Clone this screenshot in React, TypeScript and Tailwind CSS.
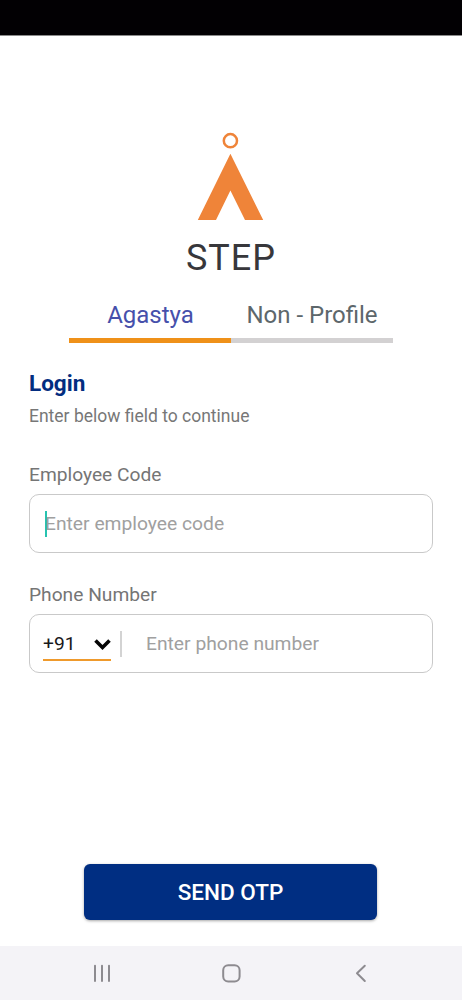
import { useState } from "react";

const tabs = ["Agastya", "Non - Profile"];

function Logo() {
  return (
    <svg width="68" height="90" viewBox="0 0 68 90" className="mt-24 shrink-0">
      <circle cx="33.4" cy="8.7" r="6.6" fill="none" stroke="#ef8439" strokeWidth="2.5" />
      <path d="M33.4 21.8 L66.2 88 H48 L33.4 58.5 L19 88 H0.8 Z" fill="#ef8439" />
    </svg>
  );
}

function NavBar() {
  return (
    <nav className="relative mt-auto h-[54px] shrink-0 bg-[#f4f3f7]">
      <svg width="462" height="54" viewBox="0 0 462 54" fill="none" stroke="#8d8b90" strokeWidth="2" strokeLinecap="round" strokeLinejoin="round">
        <path d="M95 19.7 V35 M102 19.7 V35 M109 19.7 V35" />
        <rect x="223.2" y="19.2" width="16.4" height="16.4" rx="5" />
        <path d="M364.8 19.7 L357 27.3 L364.8 35" />
      </svg>
    </nav>
  );
}

export default function App() {
  const [active, setActive] = useState(0);

  return (
    <div className="flex h-[1000px] w-[462px] flex-col overflow-hidden bg-white font-['Roboto',sans-serif]">
      <div className="h-9 shrink-0 border-b border-[#8a8a8a] bg-[#020003]" />

      <header className="flex flex-col items-center">
        <Logo />
        <h1 className="mt-3 text-[36px] leading-[48px] tracking-[1px] text-[#37373b]">STEP</h1>
        <div className="mt-[17px] flex w-[324px]">
          {tabs.map((tab, index) => (
            <button
              key={tab}
              onClick={() => setActive(index)}
              className={`h-11 w-[162px] border-b-[5px] pb-[7px] text-[24px] leading-8 whitespace-nowrap ${
                index === active ? "border-[#ef9119] pl-px text-[#4650ab]" : "border-[#d3d1d2] text-[#5d676b]"
              }`}
            >
              {tab}
            </button>
          ))}
        </div>
      </header>

      <main className="flex flex-col px-[29px] pt-[26px]">
        <h2 className="text-[22.5px] leading-7 font-bold text-[#032d80]">Login</h2>
        <p className="mt-[7px] text-[17.5px] leading-6 text-[#777777]">Enter below field to continue</p>

        <label className="mt-[35px] text-[19.2px] leading-6 text-[#757575]">Employee Code</label>
        <div className="mt-[7px] flex h-[59px] w-[404px] items-center rounded-[10px] border border-[#c9c9c9] px-[15px]">
          <span className="h-[26px] w-0.5 shrink-0 bg-[#26c3b0]" />
          <span className="-ml-0.5 pt-0.5 text-[19.25px] text-[#a0a0a0]">Enter employee code</span>
        </div>

        <label className="mt-[30px] text-[19.2px] leading-6 text-[#757575]">Phone Number</label>
        <div className="mt-[7px] flex h-[59px] w-[404px] items-center rounded-[10px] border border-[#c9c9c9] pl-[13px]">
          <div className="flex h-[34px] w-[68px] items-center justify-between border-b-2 border-[#ef9a2c] pt-1">
            <span className="text-[19.25px] text-[#18181a]">+91</span>
            <svg width="17" height="12" viewBox="0 0 17 12" fill="none" stroke="#050505" strokeWidth="3.6">
              <path d="M1.5 1.5 L8.5 8.5 L15.5 1.5" />
            </svg>
          </div>
          <span className="ml-[9px] h-[26px] w-0.5 bg-[#d3d3d3]" />
          <span className="ml-6 pt-0.5 text-[19.25px] text-[#a0a0a0]">Enter phone number</span>
        </div>
      </main>

      <button className="mt-[191px] ml-[84px] h-14 w-[293px] shrink-0 rounded-md bg-[#002e82] pt-0.5 text-[22.5px] font-medium text-white shadow-[0_1px_3px_rgba(0,0,0,0.35)]">
        SEND OTP
      </button>

      <NavBar />
    </div>
  );
}
